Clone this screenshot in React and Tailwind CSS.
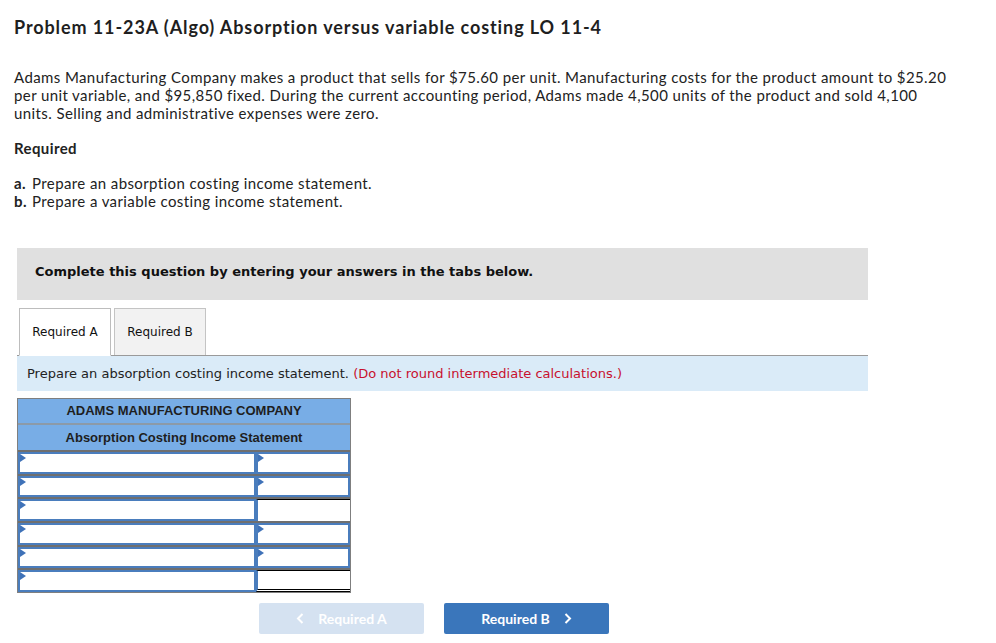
import React from 'react'

const lato = { fontFamily: 'Lato, "Open Sans", sans-serif' }
const verdana = { fontFamily: '"DejaVu Sans", Verdana, sans-serif' }
const arial = { fontFamily: '"Liberation Sans", Arial, sans-serif' }

const Tri = () => (
  <span className="absolute left-0 top-0 w-0 h-0 border-t-[4px] border-b-[4px] border-l-[6px] border-t-transparent border-b-transparent border-l-[#3f72b8]" />
)

const InputCell = ({ tri = true }) => (
  <div className="relative h-full border-2 border-[#4a7dbd] bg-white">
    {tri && <Tri />}
  </div>
)

const rows = [
  { right: 'input' },
  { right: 'input' },
  { right: 'total' },
  { right: 'input' },
  { right: 'input' },
  { right: 'double' },
]

const IncomeTable = () => (
  <div className="w-[334px] border border-[#7f7f7f]" style={arial}>
    <div className="h-[26px] bg-[#78ade6] border-b-2 border-[#8c9aa8] flex items-center justify-center text-[13px] font-bold text-[#1e1e1e]">
      ADAMS MANUFACTURING COMPANY
    </div>
    <div className="h-[25px] bg-[#78ade6] flex items-center justify-center text-[13px] font-bold text-[#1e1e1e]">
      Absorption Costing Income Statement
    </div>
    {rows.map((r, i) => (
      <div key={i} className="grid grid-cols-[238px_1fr] h-[23.7px] border-t-2 border-[#6f6f6f]">
        <InputCell />
        {r.right === 'input' && <InputCell />}
        {r.right === 'total' && <div className="h-full bg-white border-t border-black border-l-2 border-l-[#4a7dbd]" />}
        {r.right === 'double' && (
          <div className="h-full bg-white border-l-2 border-l-[#4a7dbd] border-t border-t-black border-b-[3px] border-double border-b-black" />
        )}
      </div>
    ))}
  </div>
)

export default function App() {
  return (
    <div className="w-[996px] min-h-[643px] bg-white text-[#222]">
      <div className="pl-[14px] pt-[15px]">
        <h1 className="text-[18px] font-bold text-[#1f1f1f] leading-[24px] tracking-[0.9px]" style={lato}>
          Problem 11-23A (Algo) Absorption versus variable costing LO 11-4
        </h1>

        <div className="tracking-[0.4px]" style={lato}>
          <p className="mt-[29px] text-[15px] leading-[18px] text-[#222] w-[945px]">
            Adams Manufacturing Company makes a product that sells for $75.60 per unit. Manufacturing costs for the product amount to $25.20 per unit variable, and $95,850 fixed. During the current accounting period, Adams made 4,500 units of the product and sold 4,100 units. Selling and administrative expenses were zero.
          </p>

          <p className="mt-[17px] text-[15px] font-bold leading-[18px]">Required</p>

          <div className="mt-[17px] text-[15px] leading-[18px]">
            <div className="flex"><span className="w-[18px] font-bold">a.</span><span>Prepare an absorption costing income statement.</span></div>
            <div className="flex"><span className="w-[18px] font-bold">b.</span><span>Prepare a variable costing income statement.</span></div>
          </div>
        </div>
      </div>

      <div className="ml-[17px] w-[851px] mt-[38px]">
        <div className="h-[52px] bg-[#e0e0e0] flex items-center pl-[18px] pb-[5px] text-[13px] font-bold text-[#111]" style={verdana}>
          Complete this question by entering your answers in the tabs below.
        </div>

        <div className="mt-[8px] flex items-end gap-[3px] pl-[2px] border-b border-[#9a9a9a]" style={verdana}>
          <div className="w-[92px] h-[48px] -mb-px bg-white border border-[#bdbdbd] border-b-white flex items-center justify-center text-[12px] text-[#111]">
            Required A
          </div>
          <div className="w-[92px] h-[47px] bg-[#f2f2f2] border border-[#c4c4c4] border-b-0 flex items-center justify-center text-[12px] text-[#111]">
            Required B
          </div>
        </div>

        <div className="h-[35px] bg-[#daebf8] flex items-center pl-[10px] text-[13px] text-[#222]" style={verdana}>
          Prepare an absorption costing income statement.&nbsp;<span className="text-[#c8102e]">(Do not round intermediate calculations.)</span>
        </div>

        <div className="mt-[7px]">
          <IncomeTable />
        </div>

        <div className="mt-[10px] flex gap-[20px] pl-[242px]" style={lato}>
          <button className="w-[165px] h-[31px] bg-[#d5e2f1] rounded-[2px] text-white text-[14px] font-bold flex items-center justify-center gap-[14px]">
            <svg width="8" height="11" viewBox="0 0 8 11"><path d="M6.5 1 L2 5.5 L6.5 10" stroke="white" strokeWidth="2" fill="none" /></svg>
            Required A
          </button>
          <button className="w-[165px] h-[31px] bg-[#3a76bb] rounded-[2px] text-white text-[14px] font-bold flex items-center justify-center gap-[14px]">
            Required B
            <svg width="8" height="11" viewBox="0 0 8 11"><path d="M1.5 1 L6 5.5 L1.5 10" stroke="white" strokeWidth="2" fill="none" /></svg>
          </button>
        </div>
      </div>
    </div>
  )
}
